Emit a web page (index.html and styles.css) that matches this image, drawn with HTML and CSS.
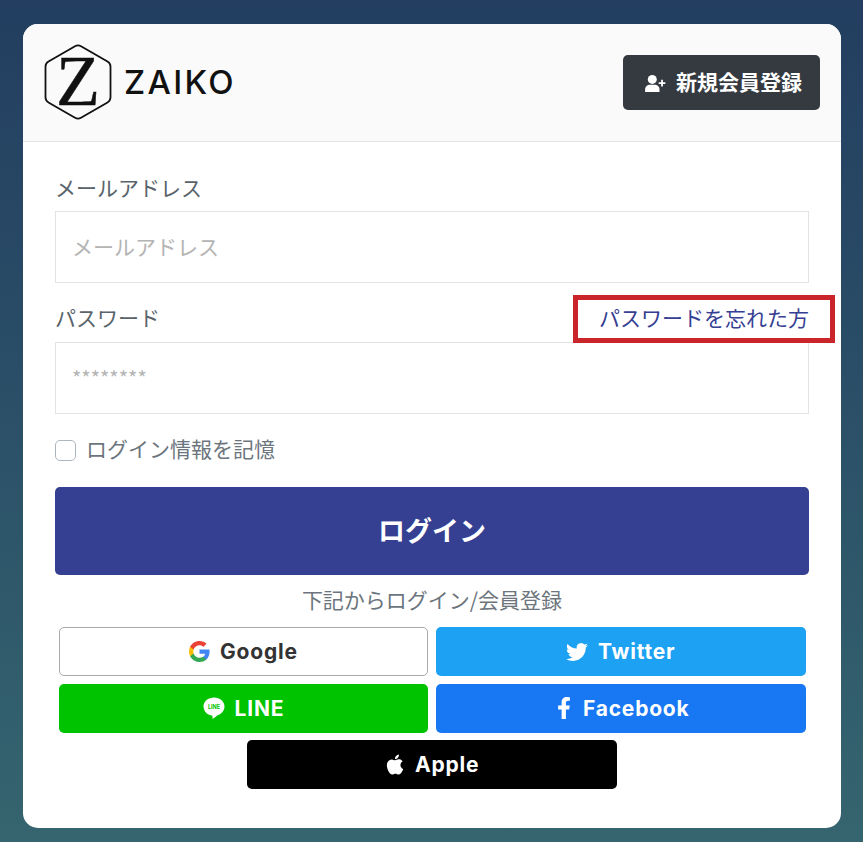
FILE: index.html
```html
<!doctype html>
<html lang="ja">
  <head>
    <meta charset="utf-8">
    <meta name="viewport" content="width=device-width, initial-scale=1">
    <title>ZAIKO</title>
    <link rel="stylesheet" href="styles.css">
  </head>
  <body>
    <main class="card">
      <header class="card-head">
        <a class="logo" href="#">
          <svg class="logo-mark" viewBox="0 0 68 76" width="68" height="76">
            <path d="M31 2.2a6 6 0 0 1 6 0L63.500 17.500a6 6 0 0 1 3 5.200v30.600a6 6 0 0 1-3 5.200L37 73.800a6 6 0 0 1-6 0L4.500 58.500a6 6 0 0 1-3-5.200V22.700a6 6 0 0 1 3-5.200z" fill="none" stroke="#111" stroke-width="1.800"/>
            <text class="logo-z" x="34" y="61" text-anchor="middle">Z</text>
          </svg>
          <span class="logo-name">ZAIKO</span>
        </a>
        <a class="signup" href="#">
          <svg viewBox="0 0 24 20" width="22" height="18" fill="#fff">
            <circle cx="9" cy="6" r="5"/>
            <path d="M1 20v-2.500C1 14 3.500 12 6.500 12h5c3 0 5.500 2 5.500 5.500V20z"/>
            <path d="M18.800 6.500h2v2.700h2.700v2h-2.700v2.700h-2v-2.700h-2.700v-2h2.700z"/>
          </svg>
          <span class="signup-text">新規会員登録</span>
        </a>
      </header>

      <form class="login">
        <div class="label-row">
          <label for="email">メールアドレス</label>
        </div>
        <input id="email" class="field" type="text" placeholder="メールアドレス">

        <div class="label-row label-row-pass">
          <label for="password">パスワード</label>
          <a class="forgot" href="#">パスワードを忘れた方</a>
        </div>
        <input id="password" class="field field-pass" type="text" placeholder="********">

        <label class="remember">
          <input type="checkbox">
          <span class="remember-text">ログイン情報を記憶</span>
        </label>

        <button class="submit" type="button">ログイン</button>

        <p class="social-title">下記からログイン/会員登録</p>

        <div class="social">
          <a class="social-btn google" href="#">
            <svg viewBox="0 0 18 18" width="21" height="21">
              <path fill="#4285F4" d="M17.640 9.200c0-.637-.057-1.251-.164-1.840H9v3.481h4.844c-.209 1.125-.843 2.078-1.796 2.717v2.258h2.908c1.702-1.567 2.684-3.874 2.684-6.615z"/>
              <path fill="#34A853" d="M9 18c2.430 0 4.467-.806 5.956-2.180l-2.908-2.259c-.806.540-1.837.860-3.048.860-2.344 0-4.328-1.584-5.036-3.711H.957v2.332C2.438 15.983 5.482 18 9 18z"/>
              <path fill="#FBBC05" d="M3.964 10.710c-.180-.540-.282-1.117-.282-1.710s.102-1.170.282-1.710V4.958H.957C.347 6.173 0 7.548 0 9s.348 2.827.957 4.042l3.007-2.332z"/>
              <path fill="#EA4335" d="M9 3.580c1.321 0 2.508.454 3.440 1.345l2.582-2.580C13.463.891 11.426 0 9 0 5.482 0 2.438 2.017.957 4.958L3.964 7.290C4.672 5.163 6.656 3.580 9 3.580z"/>
            </svg>
            Google
          </a>
          <a class="social-btn twitter" href="#">
            <svg viewBox="0 0 24 24" width="22" height="22" fill="#fff">
              <path d="M23.953 4.570a10 10 0 0 1-2.825.775 4.958 4.958 0 0 0 2.163-2.723c-.951.555-2.005.959-3.127 1.184a4.920 4.920 0 0 0-8.384 4.482C7.690 8.095 4.067 6.130 1.640 3.162a4.822 4.822 0 0 0-.666 2.475c0 1.710.870 3.213 2.188 4.096a4.904 4.904 0 0 1-2.228-.616v.060a4.923 4.923 0 0 0 3.946 4.827 4.996 4.996 0 0 1-2.212.085 4.936 4.936 0 0 0 4.604 3.417 9.867 9.867 0 0 1-6.102 2.105c-.390 0-.779-.023-1.170-.067a13.995 13.995 0 0 0 7.557 2.209c9.053 0 13.998-7.496 13.998-13.985 0-.210 0-.420-.015-.630A9.935 9.935 0 0 0 24 4.590z"/>
            </svg>
            Twitter
          </a>
          <a class="social-btn line" href="#">
            <svg viewBox="0 0 22 22" width="22" height="22">
              <path fill="#fff" d="M11 .5C5.200.5.500 4.400.500 9.500s4.700 9 8.400 9c.5 0 .6.300.6.800l-.1 1.700c0 .6.400.8.900.5 1.200-.7 3-2.100 4.300-3.200 3.800-1.300 6.900-4.600 6.900-8.800C21.500 4.400 16.800.5 11 .5z"/>
              <text class="line-mark" x="11" y="11.500" text-anchor="middle">LINE</text>
            </svg>
            LINE
          </a>
          <a class="social-btn facebook" href="#">
            <svg viewBox="0 0 320 512" width="14" height="22" fill="#fff">
              <path d="M279.140 288l14.220-92.660h-88.910v-60.130c0-25.350 12.420-50.060 52.240-50.060h40.420V6.260S260.430 0 225.360 0c-73.220 0-121.080 44.380-121.080 124.720v70.620H22.890V288h81.390v224h100.170V288z"/>
            </svg>
            Facebook
          </a>
          <a class="social-btn apple" href="#">
            <svg viewBox="0 0 24 24" width="20" height="21" fill="#fff">
              <path d="M12.152 6.896c-.948 0-2.415-1.078-3.960-1.040-2.040.027-3.910 1.183-4.961 3.014-2.117 3.675-.546 9.103 1.519 12.090 1.013 1.454 2.208 3.090 3.792 3.039 1.520-.065 2.090-.987 3.935-.987 1.831 0 2.350.987 3.960.948 1.637-.026 2.676-1.480 3.676-2.948 1.156-1.688 1.636-3.325 1.662-3.415-.039-.013-3.182-1.221-3.220-4.857-.026-3.040 2.480-4.494 2.597-4.559-1.429-2.090-3.623-2.324-4.390-2.376-2-.156-3.675 1.090-4.610 1.090zM15.530 3.830c.843-1.012 1.400-2.427 1.245-3.830-1.207.052-2.662.805-3.532 1.818-.780.896-1.454 2.338-1.273 3.714 1.338.104 2.715-.688 3.559-1.701"/>
            </svg>
            Apple
          </a>
        </div>
      </form>
    </main>
  </body>
</html>
```

FILE: styles.css
```css
html {
  height: 100%;
}

body {
  margin: 0;
  min-height: 842px;
  box-sizing: border-box;
  padding: 24px 22px 14px 23px;
  background: linear-gradient(180deg, #233e60 0%, #2b5068 50%, #35656f 100%);
  font-family: "Noto Sans CJK JP", "Liberation Sans", sans-serif;
}

a {
  text-decoration: none;
}

.card {
  height: 804px;
  background-color: #fff;
  border-radius: 15px;
  overflow: hidden;
}

.card-head {
  height: 118px;
  box-sizing: border-box;
  display: flex;
  justify-content: space-between;
  align-items: center;
  padding: 0 21px;
  background-color: #fafafa;
  border-bottom: 1px solid #e4e4e4;
}

.logo {
  display: flex;
  align-items: center;
  gap: 12px;
  margin-top: -1px;
}

.logo-mark {
  overflow: visible;
}

.logo-z {
  font-family: "Liberation Serif", serif;
  font-size: 72px;
  fill: #111;
  stroke: #111;
  stroke-width: .500px;
}

.logo-name {
  font-family: Inter, sans-serif;
  font-size: 33px;
  font-weight: 500;
  letter-spacing: 2.300px;
  color: #111;
}

.signup {
  display: flex;
  align-items: center;
  gap: 10px;
  width: 197px;
  height: 55px;
  box-sizing: border-box;
  padding-left: 21px;
  background-color: #343a40;
  border-radius: 5px;
  color: #fff;
  font-size: 21px;
  font-weight: 700;
}

.signup-text {
  margin-bottom: 4px;
}

.login {
  padding: 26px 32px 0;
}

.label-row {
  display: flex;
  justify-content: space-between;
  align-items: center;
  height: 43px;
  box-sizing: border-box;
  padding-bottom: 6px;
  font-size: 21px;
  color: #59636b;
}

.label-row-pass {
  height: 59px;
  padding: 8px 0 0;
}

.forgot {
  position: relative;
  color: #354093;
}

/* red annotation around the link */
.forgot::after {
  content: "";
  position: absolute;
  left: -26px;
  right: -26px;
  top: -7px;
  height: 38px;
  border: 5px solid #c9252b;
}

.field {
  display: block;
  width: 100%;
  height: 72px;
  box-sizing: border-box;
  padding: 0 16px 2px;
  background-color: #fff;
  border: 1px solid #e3e3e3;
  font-family: inherit;
  font-size: 21px;
  color: #333;
  outline: none;
}

.field::placeholder {
  color: #b4b4b4;
}

.field-pass {
  font-size: 20px;
}

.remember {
  display: flex;
  align-items: center;
  gap: 10px;
  height: 73px;
  font-size: 21px;
  color: #6c757d;
}

.remember input {
  appearance: none;
  width: 21px;
  height: 21px;
  margin: 0;
  background-color: #fff;
  border: 1px solid #adb5bd;
  border-radius: 5px;
}

.remember-text {
  padding-bottom: 6px;
}

.submit {
  display: block;
  width: 100%;
  height: 88px;
  padding: 0 0 4px;
  background-color: #354093;
  border: 0;
  border-radius: 5px;
  color: #fff;
  font-family: inherit;
  font-size: 27px;
  font-weight: 700;
}

.social-title {
  margin: 0;
  height: 52px;
  line-height: 48px;
  text-align: center;
  font-size: 21px;
  color: #6c757d;
}

.social {
  display: flex;
  flex-wrap: wrap;
  justify-content: center;
  gap: 7.500px 7.700px;
  padding: 0 3.400px 0 3.600px;
}

.social-btn {
  display: flex;
  align-items: center;
  justify-content: center;
  gap: 10px;
  width: 369.600px;
  height: 49px;
  box-sizing: border-box;
  border-radius: 5px;
  color: #fff;
  font-family: Inter, sans-serif;
  font-size: 21px;
  font-weight: 700;
  letter-spacing: .800px;
}

.google {
  background-color: #fff;
  border: 1px solid #a9a9a9;
  color: #333;
}

.twitter {
  background-color: #1da1f2;
}

.line {
  background-color: #00c300;
}

.line-mark {
  font-family: Inter, sans-serif;
  font-size: 5.500px;
  font-weight: 700;
  letter-spacing: 0;
  fill: #00c300;
}

.facebook {
  gap: 12px;
  padding-left: 5px;
  background-color: #1877f2;
}

.apple {
  background-color: #000;
}
```
